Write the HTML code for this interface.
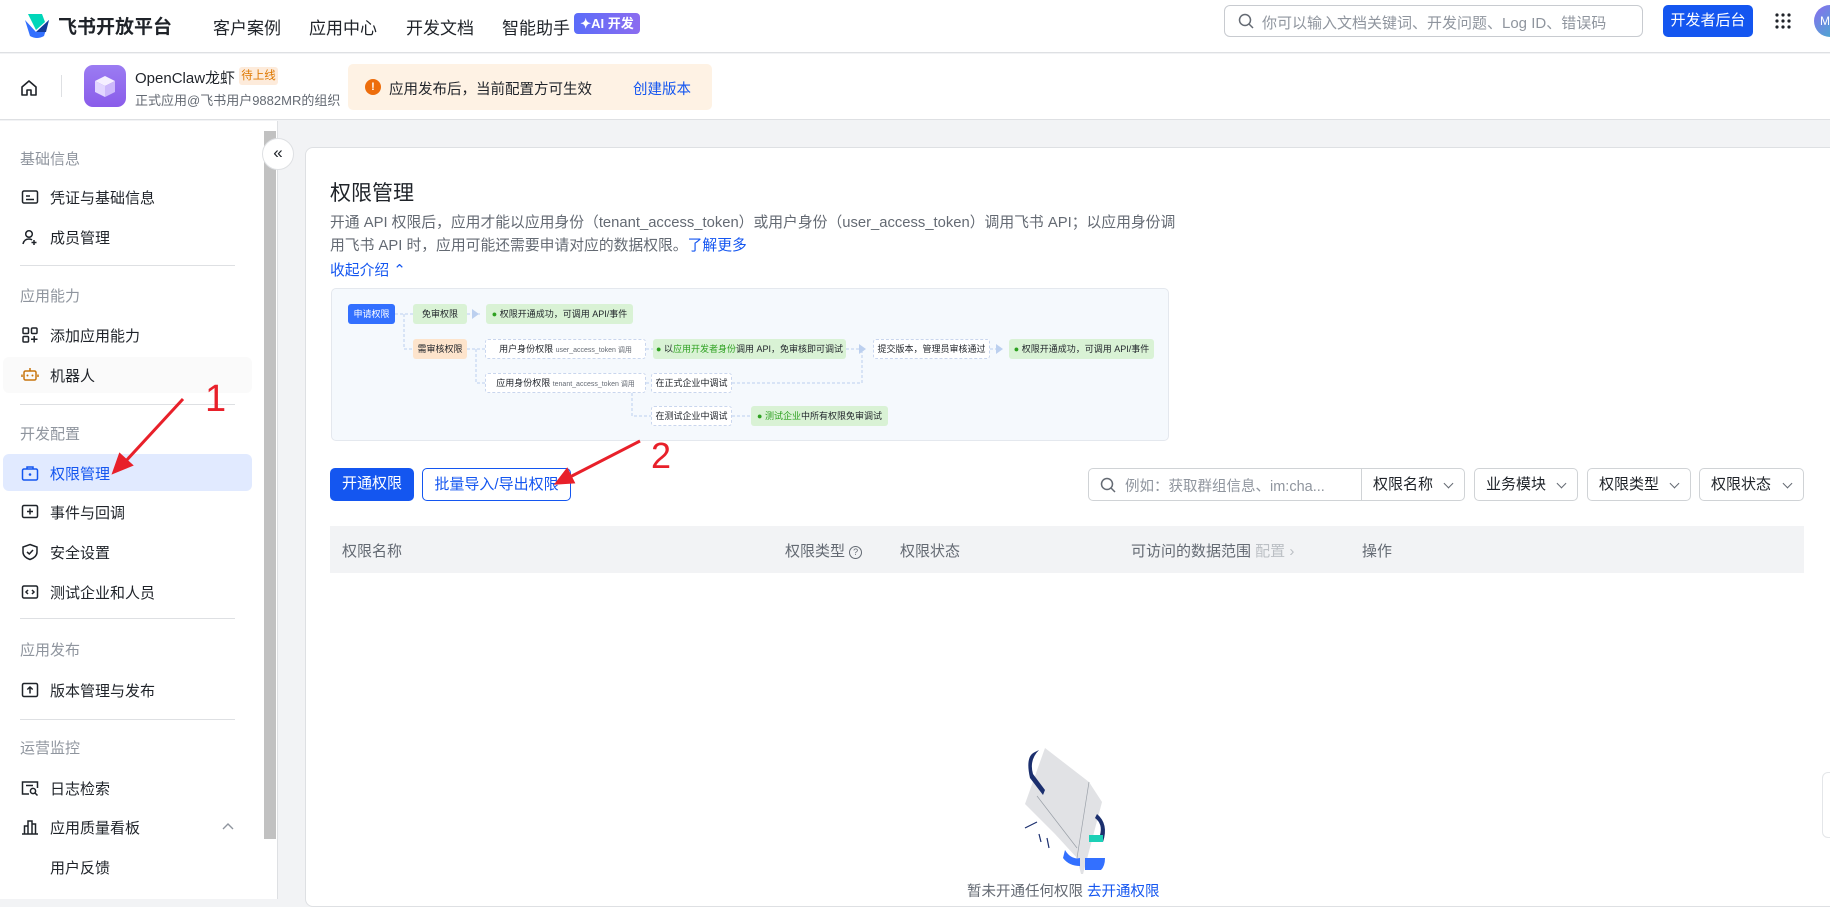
<!DOCTYPE html>
<html><head><meta charset="utf-8">
<style>
*{box-sizing:border-box;margin:0;padding:0}
body{width:1830px;height:899px;overflow:hidden;background:#f2f3f5;font-family:"Liberation Sans","Noto Sans CJK SC",sans-serif;color:#1f2329;position:relative}
.a{position:absolute}
.top{left:0;top:0;width:1830px;height:53px;background:#fff;border-bottom:1px solid #dee0e3}
.nav{top:14px;font-size:17px;color:#1f2329}
.bar2{left:0;top:54px;width:1830px;height:66px;background:#fff;border-bottom:1px solid #dee0e3}
.side{left:0;top:121px;width:278px;height:778px;background:#fff;border-right:1px solid #dee0e3}
.grp{left:20px;font-size:15px;color:#8f959e}
.it{left:50px;font-size:15px;color:#1f2329}
.ic{left:21px;width:18px;height:18px}
.div{left:20px;width:215px;height:1px;background:#dee0e3}
.card{left:305px;top:147px;width:1540px;height:760px;background:#fff;border:1px solid #dee0e3;border-radius:8px}
.dg{font-size:9px;position:absolute;height:20px;line-height:20px;border-radius:3px;text-align:center;white-space:nowrap;overflow:hidden}
.g{background:#d9f2d5;color:#1f2329}
.d{background:#fff;border:1px dashed #c9d6ee;line-height:18px}
.btn{top:468px;height:33px;border-radius:5px;font-size:15px;line-height:31px;text-align:center}
.sel{top:468px;height:33px;border:1px solid #d0d3d6;border-radius:5px;font-size:15px;line-height:31px;padding-left:11px;background:#fff}
.sel:after{content:"";position:absolute;right:12px;top:11px;width:6px;height:6px;border-right:1.5px solid #646a73;border-bottom:1.5px solid #646a73;transform:rotate(45deg)}
.th{top:540px;font-size:15px;color:#646a73}
</style></head><body>
<div class="a top"></div>
<svg class="a" style="left:22px;top:12px" width="30" height="28" viewBox="0 0 30 28"><path d="M3 8 L14 20 L27 8 L22 24 Q15 28 8 24 Z" fill="#3370ff"/><path d="M6 2 H20 L23 10 L14 18 Z" fill="#00d6b9"/><path d="M14 20 L27 8 L24 20 Z" fill="#133c9a"/></svg>
<div class="a" style="left:58px;top:12px;font-size:19px;font-weight:bold">飞书开放平台</div>
<div class="a nav" style="left:213px">客户案例</div>
<div class="a nav" style="left:309px">应用中心</div>
<div class="a nav" style="left:406px">开发文档</div>
<div class="a nav" style="left:502px">智能助手</div>
<div class="a" style="left:574px;top:13px;width:66px;height:21px;border-radius:4px;background:linear-gradient(90deg,#5b6cf9,#8b6cf0);color:#fff;font-size:13px;line-height:21px;text-align:center;font-weight:bold">✦AI 开发</div>
<div class="a" style="left:1224px;top:5px;width:419px;height:32px;border:1px solid #c8cbd0;border-radius:6px"></div>
<svg class="a" style="left:1238px;top:13px" width="16" height="16"><circle cx="7" cy="7" r="5.5" stroke="#646a73" stroke-width="1.5" fill="none"/><path d="M11 11 L15 15" stroke="#646a73" stroke-width="1.5"/></svg>
<div class="a" style="left:1262px;top:12px;font-size:15px;color:#8f959e">你可以输入文档关键词、开发问题、Log ID、错误码</div>
<div class="a" style="left:1663px;top:5px;width:90px;height:32px;background:#1456f0;border-radius:5px;color:#fff;font-size:15px;line-height:32px;text-align:center">开发者后台</div>
<svg class="a" style="left:1774px;top:12px" width="18" height="18"><g fill="#1f2329"><circle cx="3" cy="3" r="1.6"/><circle cx="9" cy="3" r="1.6"/><circle cx="15" cy="3" r="1.6"/><circle cx="3" cy="9" r="1.6"/><circle cx="9" cy="9" r="1.6"/><circle cx="15" cy="9" r="1.6"/><circle cx="3" cy="15" r="1.6"/><circle cx="9" cy="15" r="1.6"/><circle cx="15" cy="15" r="1.6"/></g></svg>
<div class="a" style="left:1814px;top:5px;width:32px;height:32px;border-radius:50%;background:linear-gradient(135deg,#8a6cf0,#3cb8c8);color:#fff;font-size:12px;line-height:32px;padding-left:6px">M</div>

<div class="a bar2"></div>
<svg class="a" style="left:19px;top:78px" width="20" height="20" viewBox="0 0 20 20"><path d="M3 9 L10 3 L17 9 V17 H12 V12 H8 V17 H3 Z" fill="none" stroke="#1f2329" stroke-width="1.6" stroke-linejoin="round"/></svg>
<div class="a" style="left:61px;top:75px;width:1px;height:22px;background:#dee0e3"></div>
<div class="a" style="left:84px;top:65px;width:42px;height:42px;border-radius:9px;background:linear-gradient(180deg,#9b7cf2,#8a5cea)"></div>
<svg class="a" style="left:92px;top:73px" width="26" height="26" viewBox="0 0 26 26"><path d="M13 3 L23 8 L13 13 L3 8Z" fill="#f5efff"/><path d="M3 8 L13 13 V24 L3 19Z" fill="#e2d6ff"/><path d="M23 8 L13 13 V24 L23 19Z" fill="#cdb9fb"/></svg>
<div class="a" style="left:135px;top:67px;font-size:15px">OpenClaw龙虾</div>
<div class="a" style="left:239px;top:67px;width:39px;height:18px;background:#fdebdb;color:#de7802;font-size:11.5px;line-height:18px;text-align:center;border-radius:3px">待上线</div>
<div class="a" style="left:135px;top:90px;font-size:13px;color:#646a73">正式应用@飞书用户9882MR的组织</div>
<div class="a" style="left:348px;top:64px;width:364px;height:46px;background:#fef2e4;border-radius:5px"></div>
<div class="a" style="left:365px;top:79px;width:16px;height:16px;border-radius:50%;background:#ed6d0c;color:#fff;font-size:11px;line-height:16px;text-align:center;font-weight:bold">!</div>
<div class="a" style="left:389px;top:78px;font-size:14.5px">应用发布后，当前配置方可生效</div>
<div class="a" style="left:633px;top:78px;font-size:14.5px;color:#1456f0">创建版本</div>

<div class="a side"></div>
<div class="a" style="left:264px;top:131px;width:12px;height:708px;background:#c1c1c1"></div>
<div class="a grp" style="top:148px">基础信息</div>
<svg class="a ic" style="top:188px" viewBox="0 0 18 18"><rect x="1.5" y="3" width="15" height="12" rx="1.5" fill="none" stroke="#1f2329" stroke-width="1.5"/><path d="M5 8H9M5 11.5H13" stroke="#1f2329" stroke-width="1.5"/></svg>
<div class="a it" style="top:187px">凭证与基础信息</div>
<svg class="a ic" style="top:228px" viewBox="0 0 18 18"><circle cx="8" cy="6" r="3.3" fill="none" stroke="#1f2329" stroke-width="1.5"/><path d="M2 16 Q3 11 8 11 Q10 11 11 12M13 12V17M10.5 14.5H15.5" fill="none" stroke="#1f2329" stroke-width="1.5"/></svg>
<div class="a it" style="top:227px">成员管理</div>
<div class="a div" style="top:265px"></div>
<div class="a grp" style="top:285px">应用能力</div>
<svg class="a ic" style="top:326px" viewBox="0 0 18 18"><g fill="none" stroke="#1f2329" stroke-width="1.5"><rect x="2" y="2" width="5.5" height="5.5" rx="1"/><rect x="10.5" y="2" width="5.5" height="5.5" rx="1"/><rect x="2" y="10.5" width="5.5" height="5.5" rx="1"/><path d="M13.2 10V16.5M10 13.2H16.5"/></g></svg>
<div class="a it" style="top:325px">添加应用能力</div>
<div class="a" style="left:3px;top:357px;width:249px;height:36px;background:#fafafa;border-radius:6px"></div>
<svg class="a ic" style="top:366px" viewBox="0 0 18 18"><g fill="none" stroke="#c7740c" stroke-width="1.5"><rect x="3" y="5" width="12" height="9" rx="1.5"/><path d="M9 2V5M1 8.5V11M17 8.5V11"/></g><circle cx="6.5" cy="9.5" r="1" fill="#c7740c"/><circle cx="11.5" cy="9.5" r="1" fill="#c7740c"/></svg>
<div class="a it" style="top:365px">机器人</div>
<div class="a div" style="top:404px"></div>
<div class="a grp" style="top:423px">开发配置</div>
<div class="a" style="left:3px;top:454px;width:249px;height:37px;background:#e1eaff;border-radius:6px"></div>
<svg class="a ic" style="top:464px" viewBox="0 0 18 18"><g fill="none" stroke="#1456f0" stroke-width="1.5"><rect x="1.5" y="5" width="15" height="11" rx="1.5"/><path d="M6 5V3H12V5"/></g><circle cx="9" cy="10.5" r="1.3" fill="#1456f0"/></svg>
<div class="a it" style="top:463px;color:#1456f0">权限管理</div>
<svg class="a ic" style="top:503px" viewBox="0 0 18 18"><g fill="none" stroke="#1f2329" stroke-width="1.5"><rect x="1.5" y="2.5" width="15" height="12" rx="1.5"/><path d="M9 5.5V11.5M6 8.5H12"/></g></svg>
<div class="a it" style="top:502px">事件与回调</div>
<svg class="a ic" style="top:543px" viewBox="0 0 18 18"><g fill="none" stroke="#1f2329" stroke-width="1.5"><path d="M9 1.5 L16 4 V9 Q16 14 9 16.5 Q2 14 2 9 V4Z"/><path d="M6 9 L8.3 11 L12 7"/></g></svg>
<div class="a it" style="top:542px">安全设置</div>
<svg class="a ic" style="top:583px" viewBox="0 0 18 18"><g fill="none" stroke="#1f2329" stroke-width="1.5"><rect x="1.5" y="3" width="15" height="12" rx="1.5"/><path d="M7 7 L5 9 L7 11M11 7 L13 9 L11 11"/></g></svg>
<div class="a it" style="top:582px">测试企业和人员</div>
<div class="a div" style="top:618px"></div>
<div class="a grp" style="top:639px">应用发布</div>
<svg class="a ic" style="top:681px" viewBox="0 0 18 18"><g fill="none" stroke="#1f2329" stroke-width="1.5"><rect x="1.5" y="2.5" width="15" height="13" rx="1.5"/><path d="M9 12.5V6M6.3 8.5 L9 6 L11.7 8.5"/></g></svg>
<div class="a it" style="top:680px">版本管理与发布</div>
<div class="a div" style="top:719px"></div>
<div class="a grp" style="top:737px">运营监控</div>
<svg class="a ic" style="top:779px" viewBox="0 0 18 18"><g fill="none" stroke="#1f2329" stroke-width="1.5"><path d="M16.5 9V3H1.5V15H8"/><path d="M5 6.5H12"/><circle cx="12" cy="12" r="2.6"/><path d="M14 14 L16.5 16.5"/></g></svg>
<div class="a it" style="top:778px">日志检索</div>
<svg class="a ic" style="top:818px" viewBox="0 0 18 18"><g fill="none" stroke="#1f2329" stroke-width="1.5"><path d="M1 16H17M3.5 16V8H7V16M7 16V3H11V16M11 16V6H14.5V16"/></g></svg>
<div class="a it" style="top:817px">应用质量看板</div>
<svg class="a" style="left:222px;top:822px" width="12" height="8"><path d="M1 7 L6 2 L11 7" fill="none" stroke="#8f959e" stroke-width="1.4"/></svg>
<div class="a it" style="top:857px">用户反馈</div>
<div class="a" style="left:262px;top:138px;width:32px;height:32px;border-radius:50%;background:#fff;border:1px solid #dee0e3;font-size:17px;line-height:28px;text-align:center;color:#1f2329">«</div>

<div class="a card"></div>
<div class="a" style="left:330px;top:177px;font-size:21px">权限管理</div>
<div class="a" style="left:330px;top:212px;width:850px;font-size:14.8px;line-height:23px;color:#646a73">开通 API 权限后，应用才能以应用身份（tenant_access_token）或用户身份（user_access_token）调用飞书 API；以应用身份调用飞书 API 时，应用可能还需要申请对应的数据权限。<span style="color:#1456f0">了解更多</span></div>
<div class="a" style="left:330px;top:259px;font-size:14.8px;color:#1456f0">收起介绍 ⌃</div>

<div class="a" style="left:331px;top:288px;width:838px;height:153px;background:#f5f9fd;border:1px solid #e4e8ee;border-radius:5px">
<svg class="a" style="left:0;top:0" width="838" height="153"><g stroke="#bcd0ef" stroke-dasharray="3 2" fill="none"><path d="M63 25H81M72 25V60H81M135 25H150M135 60H153M144 60V94H153M314 60H321M514 60H528M658 60H665M314 94H319M400 94H530V60M300 94V127H319M400 127H419"/></g><g fill="#bcd0ef"><path d="M140 20 L147 25 L140 30Z"/><path d="M527 55 L534 60 L527 65Z"/><path d="M664 55 L671 60 L664 65Z"/></g></svg>
<div class="dg" style="left:16px;top:15px;width:47px;background:#3370ff;color:#fff">申请权限</div>
<div class="dg g" style="left:81px;top:15px;width:54px">免审权限</div>
<div class="dg g" style="left:154px;top:15px;width:147px"><span style="color:#2ea121">●</span> 权限开通成功，可调用 API/事件</div>
<div class="dg" style="left:81px;top:50px;width:54px;background:#fde4cc">需审核权限</div>
<div class="dg d" style="left:153px;top:50px;width:161px">用户身份权限 <span style="font-size:7px;color:#646a73">user_access_token 调用</span></div>
<div class="dg g" style="left:321px;top:50px;width:193px"><span style="color:#2ea121">●</span> 以<span style="color:#2ea121">应用开发者身份</span>调用 API，免审核即可调试</div>
<div class="dg d" style="left:541px;top:50px;width:117px">提交版本，管理员审核通过</div>
<div class="dg g" style="left:677px;top:50px;width:145px"><span style="color:#2ea121">●</span> 权限开通成功，可调用 API/事件</div>
<div class="dg d" style="left:153px;top:84px;width:161px">应用身份权限 <span style="font-size:7px;color:#646a73">tenant_access_token 调用</span></div>
<div class="dg d" style="left:319px;top:84px;width:81px">在正式企业中调试</div>
<div class="dg d" style="left:319px;top:117px;width:81px">在测试企业中调试</div>
<div class="dg g" style="left:419px;top:117px;width:137px"><span style="color:#2ea121">●</span> <span style="color:#2ea121">测试企业</span>中所有权限免审调试</div>
</div>

<div class="a btn" style="left:330px;width:84px;background:#1456f0;color:#fff">开通权限</div>
<div class="a btn" style="left:422px;width:149px;border:1px solid #1456f0;color:#1456f0;background:#fff">批量导入/导出权限</div>
<div class="a" style="left:1088px;top:468px;width:274px;height:33px;border:1px solid #d0d3d6;border-radius:5px 0 0 5px;background:#fff"></div>
<svg class="a" style="left:1100px;top:477px" width="16" height="16"><circle cx="7" cy="7" r="5.5" stroke="#646a73" stroke-width="1.5" fill="none"/><path d="M11 11 L15 15" stroke="#646a73" stroke-width="1.5"/></svg>
<div class="a" style="left:1125px;top:475px;font-size:14.5px;color:#8f959e">例如：获取群组信息、im:cha...</div>
<div class="a sel" style="left:1361px;width:104px;border-radius:0 5px 5px 0">权限名称</div>
<div class="a sel" style="left:1474px;width:104px">业务模块</div>
<div class="a sel" style="left:1587px;width:104px">权限类型</div>
<div class="a sel" style="left:1699px;width:105px">权限状态</div>
<div class="a" style="left:330px;top:526px;width:1474px;height:47px;background:#f2f3f5"></div>
<div class="a th" style="left:342px">权限名称</div>
<div class="a th" style="left:785px">权限类型 <span style="display:inline-block;width:13px;height:13px;border:1.3px solid #646a73;border-radius:50%;font-size:9px;line-height:11px;text-align:center;vertical-align:1px">?</span></div>
<div class="a th" style="left:900px">权限状态</div>
<div class="a th" style="left:1131px">可访问的数据范围 <span style="color:#bbbfc4">配置 ›</span></div>
<div class="a th" style="left:1362px">操作</div>

<svg class="a" style="left:1005px;top:738px" width="130" height="136" viewBox="0 0 130 136"><path d="M40 10 L84 44 L97 64 L77 140 L72 120 L50 96 L20 66Z" fill="#e1e2e5"/><path d="M84 44 L72 120M32 58 L72 110" stroke="#9aa0a8" stroke-width=".7"/><path d="M30 14 Q20 18 25 40 L38 57 L40 52 L28 36 Q24 22 34 12Z" fill="#1b2f6e"/><path d="M92 76 Q104 86 98 104 L84 104 L84 97 L95 97 Q98 86 90 80Z" fill="#1b2f6e"/><path d="M84 97 H98 V104 H84Z" fill="#1cd0b6"/><path d="M60 112 Q66 122 75 120 V128 Q64 128 58 120Z M80 120 H100 Q100 128 96 132 H80Z" fill="#3370ff"/><path d="M20 90 L32 84M34 96 L36 104M42 100 L44 110" stroke="#1b2f6e" stroke-width="1.2"/></svg>
<div class="a" style="left:967px;top:880px;font-size:14.5px;color:#646a73">暂未开通任何权限 <span style="color:#1456f0">去开通权限</span></div>
<div class="a" style="left:1822px;top:772px;width:20px;height:66px;background:#fff;border:1px solid #e4e6e9;border-radius:6px"></div>

<svg class="a" style="left:0;top:0" width="1830" height="899"><g stroke="#e8202a" stroke-width="3" fill="#e8202a"><path d="M183 399 L124 463" /><path d="M114 472 L120 455 L131 465Z"/><path d="M640 441 L568 478"/><path d="M557 483 L567 470 L573 482Z"/></g></svg>
<div class="a" style="left:205px;top:378px;font-size:38px;color:#e8202a">1</div>
<div class="a" style="left:651px;top:435px;font-size:36px;color:#e8202a">2</div>
</body></html>
